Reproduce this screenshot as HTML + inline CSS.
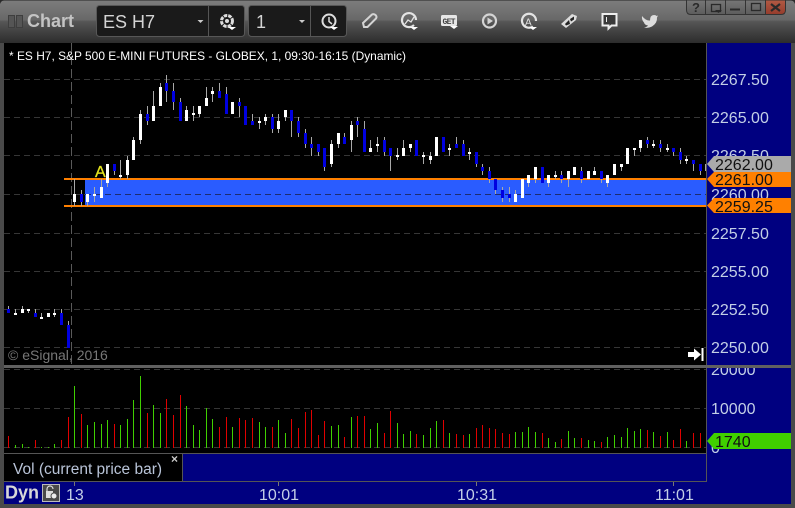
<!DOCTYPE html>
<html><head><meta charset="utf-8"><style>
html,body{margin:0;padding:0;background:#4a4a4a;width:795px;height:508px;overflow:hidden}
svg{display:block}
text{font-family:"Liberation Sans",sans-serif}
.ax{font-size:16px;fill:#c3cfe6}
.tg{font-size:16px;fill:#111}
.tm{font-size:16px;fill:#c3cfe6}
</style></head><body>
<svg width="795" height="508" viewBox="0 0 795 508" xmlns="http://www.w3.org/2000/svg">
<defs>
<linearGradient id="tb" x1="0" y1="0" x2="0" y2="1"><stop offset="0" stop-color="#7d7d7d"/><stop offset=".46" stop-color="#686868"/><stop offset=".5" stop-color="#565656"/><stop offset="1" stop-color="#2c2c2c"/></linearGradient>
<linearGradient id="bt" x1="0" y1="0" x2="0" y2="1"><stop offset="0" stop-color="#777"/><stop offset="1" stop-color="#5c5c5c"/></linearGradient>
<linearGradient id="cl" x1="0" y1="0" x2="0" y2="1"><stop offset="0" stop-color="#b25a44"/><stop offset="1" stop-color="#953c2c"/></linearGradient>
<clipPath id="vc"><rect x="707" y="368" width="84" height="114"/></clipPath>
</defs>
<rect width="795" height="508" fill="#4a4a4a"/>
<rect width="795" height="43" fill="url(#tb)"/>
<rect width="795" height="1" fill="#505050"/>
<path d="M0 0H4Q1 1 0 4ZM795 0H791Q794 1 795 4Z" fill="#2a2a2a"/>
<rect x="4" y="43" width="702" height="322" fill="#000"/>
<rect x="4" y="368" width="702" height="85" fill="#000"/>
<rect x="707" y="43" width="84" height="461" fill="#000080"/>
<rect x="4" y="482" width="703" height="22" fill="#000080"/>
<rect x="183" y="454" width="523" height="27" fill="#000080"/>
<rect x="4" y="454" width="178" height="27" fill="#000"/>
<g shape-rendering="crispEdges">
<rect x="4" y="453" width="702" height="1" fill="#555"/>
<rect x="182" y="453" width="1" height="28" fill="#555"/>
<rect x="4" y="481" width="703" height="1" fill="#555"/>
<rect x="706" y="43" width="1" height="439" fill="#555"/>
<rect x="4" y="365" width="787" height="3" fill="#606060"/>
<path d="M4 79.5H706M4 117.5H706M4 155.5H706M4 194.5H706M4 233.5H706M4 271.5H706M4 309.5H706M4 347.5H706M4 369.5H706M4 408.5H706M4 447.5H706" stroke="#363636" stroke-width="1" stroke-dasharray="6 4" fill="none"/>
<path d="M71.5 43V364" stroke="#5a5a5a" stroke-width="1" stroke-dasharray="9 4" fill="none"/>
<rect x="85" y="180" width="621" height="25" fill="#2a5cff"/>
<path d="M85 194.5H706" stroke="#1c2c70" stroke-width="1" stroke-dasharray="6 4" fill="none"/>
<rect x="64" y="178" width="642" height="2" fill="#ff8000"/>
<rect x="64" y="205" width="642" height="2" fill="#ff8000"/>
<path fill="none" stroke="#a8a8a8" stroke-width="1" d="M8.5 306V313M15.5 309V315M22.5 306V313M28.5 309V313M35.5 309V317M41.5 313V319M48.5 313V317M54.5 309V317M61.5 309V325M68.5 321V348M74.5 179V206M81.5 190V206M87.5 194V206M94.5 187V202M101.5 179V198M107.5 164V187M114.5 164V175M120.5 160V179M127.5 156V179M133.5 137V160M140.5 110V144M147.5 106V125M153.5 91V121M160.5 83V106M166.5 75V102M173.5 83V110M180.5 98V121M186.5 106V121M193.5 106V121M199.5 106V117M206.5 87V106M212.5 87V102M219.5 83V98M226.5 87V114M232.5 102V114M239.5 98V117M245.5 106V125M252.5 114V125M259.5 117V129M265.5 114V125M272.5 114V133M278.5 114V133M285.5 110V121M291.5 110V137M298.5 117V137M305.5 129V148M311.5 137V156M318.5 144V156M324.5 148V171M331.5 140V167M338.5 133V148M344.5 133V144M351.5 121V152M357.5 117V137M364.5 121V152M370.5 140V152M377.5 137V152M384.5 137V156M390.5 148V171M397.5 148V160M403.5 140V156M410.5 144V152M416.5 140V156M423.5 152V164M430.5 152V164M436.5 137V156M443.5 137V152M449.5 144V156M456.5 137V148M463.5 140V156M469.5 148V160M476.5 152V167M482.5 164V175M489.5 167V183M495.5 179V194M502.5 187V202M509.5 187V202M515.5 190V202M522.5 179V198M528.5 175V187M535.5 167V183M542.5 167V183M548.5 175V187M555.5 171V179M561.5 171V183M568.5 171V187M574.5 167V175M581.5 167V183M588.5 171V179M594.5 167V175M601.5 171V183M607.5 175V187M614.5 164V175M621.5 164V171M627.5 148V164M634.5 148V156M640.5 140V152M647.5 137V148M653.5 140V148M660.5 140V152M667.5 144V152M673.5 148V156M680.5 148V164M686.5 156V164M693.5 160V171M700.5 164V175M705.5 164V171"/>
<path fill="none" stroke="#fff" stroke-width="3" d="M15.5 313V315M22.5 309V313M28.5 309V311M41.5 317V319M48.5 313V317M54.5 313V315M74.5 194V202M87.5 194V202M94.5 194V196M101.5 187V198M107.5 164V183M120.5 175V177M127.5 160V175M133.5 140V160M140.5 114V140M153.5 106V121M160.5 87V106M186.5 110V121M193.5 113V115M199.5 106V114M206.5 98V106M212.5 91V94M232.5 102V114M259.5 121V123M265.5 117V121M278.5 121V129M285.5 110V117M331.5 144V164M338.5 133V144M351.5 125V140M370.5 148V152M377.5 144V146M397.5 155V157M403.5 148V156M410.5 144V148M423.5 155V157M430.5 156V160M436.5 137V156M449.5 148V150M469.5 152V154M515.5 194V202M522.5 179V198M528.5 175V183M535.5 167V179M548.5 175V183M555.5 175V177M568.5 171V179M574.5 167V175M588.5 171V179M594.5 171V175M607.5 175V183M614.5 164V175M621.5 164V167M627.5 148V164M634.5 148V150M640.5 140V148M653.5 144V146M667.5 148V150M686.5 159V161"/>
<path fill="none" stroke="#0000e0" stroke-width="3" d="M8.5 309V313M35.5 313V317M61.5 313V325M68.5 325V348M81.5 194V202M114.5 164V171M147.5 114V121M166.5 83V91M173.5 91V102M180.5 102V121M219.5 91V98M226.5 94V114M239.5 102V106M245.5 106V125M252.5 121V125M272.5 117V129M291.5 110V121M298.5 121V133M305.5 133V144M311.5 144V148M318.5 144V152M324.5 148V167M344.5 137V144M357.5 121V125M364.5 129V152M384.5 140V152M390.5 148V156M416.5 140V156M443.5 137V152M456.5 144V148M463.5 144V156M476.5 152V164M482.5 167V171M489.5 171V179M495.5 179V190M502.5 190V198M509.5 194V198M542.5 167V183M561.5 175V179M581.5 171V179M601.5 171V179M647.5 140V144M660.5 144V148M673.5 148V152M680.5 152V160M693.5 160V164M700.5 164V171"/>
<path fill="none" stroke="#3fd000" stroke-width="1" d="M15.5 445V448M22.5 444V448M28.5 447V448M41.5 447V448M48.5 447V448M54.5 444V448M74.5 386V448M87.5 425V448M94.5 422V448M101.5 424V448M107.5 420V448M120.5 425V448M127.5 419V448M133.5 400V448M140.5 376V448M153.5 405V448M160.5 413V448M186.5 406V448M193.5 425V448M199.5 430V448M206.5 408V448M212.5 419V448M232.5 427V448M259.5 422V448M265.5 427V448M278.5 420V448M285.5 433V448M331.5 426V448M338.5 425V448M351.5 417V448M370.5 429V448M377.5 423V448M397.5 423V448M403.5 434V448M410.5 431V448M423.5 435V448M430.5 428V448M436.5 421V448M449.5 433V448M469.5 434V448M515.5 432V448M522.5 432V448M528.5 427V448M535.5 432V448M548.5 438V448M555.5 442V448M568.5 431V448M574.5 438V448M588.5 440V448M594.5 441V448M607.5 437V448M614.5 435V448M621.5 437V448M627.5 428V448M634.5 431V448M640.5 429V448M653.5 432V448M667.5 432V448M686.5 441V448"/>
<path fill="none" stroke="#e00000" stroke-width="1" d="M8.5 436V448M35.5 440V448M61.5 440V448M68.5 417V448M81.5 414V448M114.5 424V448M147.5 413V448M166.5 399V448M173.5 415V448M180.5 395V448M219.5 427V448M226.5 417V448M239.5 418V448M245.5 420V448M252.5 418V448M272.5 427V448M291.5 419V448M298.5 428V448M305.5 412V448M311.5 410V448M318.5 435V448M324.5 421V448M344.5 437V448M357.5 416V448M364.5 416V448M384.5 433V448M390.5 411V448M416.5 434V448M443.5 420V448M456.5 434V448M463.5 435V448M476.5 428V448M482.5 425V448M489.5 428V448M495.5 429V448M502.5 433V448M509.5 434V448M542.5 433V448M561.5 439V448M581.5 438V448M601.5 442V448M647.5 430V448M660.5 436V448M673.5 440V448M680.5 429V448M693.5 433V448M700.5 433V448"/>
<path d="M74.5 482V486M278.5 482V486M476.5 482V486M673.5 482V486" stroke="#777" stroke-width="1"/>
</g>

<text x="9" y="60" font-size="12" fill="#fff" textLength="397" lengthAdjust="spacingAndGlyphs">* ES H7, S&amp;P 500 E-MINI FUTURES - GLOBEX, 1, 09:30-16:15 (Dynamic)</text>
<text x="95" y="177" font-size="16" fill="#e2e21e" stroke="#e2e21e" stroke-width=".3">A</text>
<text x="8" y="360" font-size="14" fill="#777">© eSignal, 2016</text>
<path d="M688 352H694V348.500L701 354.500L694 360.500V357H688Z" fill="#fff"/><rect x="701.500" y="348" width="2" height="13" fill="#fff"/>

<g class="ax">
<text class="ax" x="711" y="85">2267.50</text>
<text class="ax" x="711" y="123">2265.00</text>
<text class="ax" x="711" y="161">2262.50</text>
<text class="ax" x="711" y="200">2260.00</text>
<text class="ax" x="711" y="239">2257.50</text>
<text class="ax" x="711" y="277">2255.00</text>
<text class="ax" x="711" y="315">2252.50</text>
<text class="ax" x="711" y="353">2250.00</text>
<g clip-path="url(#vc)"><text class="ax" x="711" y="375">20000</text>
<text class="ax" x="711" y="414">10000</text>
<text class="ax" x="711" y="453">0</text></g>
</g>
<path d="M707 164L714 156H791V172H714Z" fill="#aaa"/>
<text class="tg" x="715" y="170">2262.00</text>
<path d="M707 179L714 172H791V187H714Z" fill="#ff8000"/>
<text class="tg" x="715" y="185">2261.00</text>
<path d="M707 205.500L714 198H791V213H714Z" fill="#ff8000"/>
<text class="tg" x="715" y="212">2259.25</text>
<path d="M707 441L714 433H791V449H714Z" fill="#40d000"/>
<text class="tg" x="715" y="447">1740</text>

<text x="13" y="474" font-size="15.500" fill="#b9c4d8">Vol (current price bar)</text>
<text x="171" y="463" font-size="12" font-weight="bold" fill="#ccc">×</text>
<text x="5" y="498.500" font-size="18" font-weight="bold" fill="#d8d8d8">Dyn</text>
<rect x="42.500" y="484.500" width="17" height="17" fill="#4a4a4a" stroke="#bbb"/>
<path d="M47 491V489A3 3 0 0 1 53 489" fill="none" stroke="#ddd" stroke-width="1.200"/><rect x="46" y="491" width="7" height="7" fill="#ddd"/><circle cx="54" cy="496" r="3" fill="#eee" stroke="#4a4a4a"/>
<text class="tm" x="66" y="500">13</text>
<text class="tm" x="259" y="500">10:01</text>
<text class="tm" x="457" y="500">10:31</text>
<text class="tm" x="655" y="500">11:01</text>

<!-- header -->
<rect x="8.500" y="15.500" width="6" height="12" fill="#555" stroke="#3e3e3e"/>
<rect x="16.500" y="15.500" width="6" height="12" fill="#555" stroke="#3e3e3e"/>
<text x="27" y="27" font-size="18" font-weight="bold" fill="#c4c4c4">Chart</text>
<rect x="96.500" y="5.500" width="148" height="31" rx="3" fill="#1a1a1a" stroke="#575757"/>
<rect x="208" y="6" width="1" height="30" fill="#555"/>
<text x="103" y="28" font-size="18" fill="#d4d4d4">ES H7</text>
<path d="M197.500 20H203.500L200.500 23Z" fill="#ccc"/>
<circle cx="227" cy="21" r="5.500" fill="none" stroke="#ddd" stroke-width="3" stroke-dasharray="3.500 1"/><circle cx="227" cy="21" r="2" fill="#ddd"/>
<path d="M228 27H236L232 30Z" fill="#fff"/>
<rect x="248.500" y="5.500" width="98" height="31" rx="3" fill="#1a1a1a" stroke="#575757"/>
<rect x="310" y="6" width="1" height="30" fill="#555"/>
<text x="256" y="28" font-size="18" fill="#d4d4d4">1</text>
<path d="M299 20H305L302 23Z" fill="#ccc"/>
<circle cx="329" cy="21" r="6.500" fill="none" stroke="#ddd" stroke-width="2"/><path d="M329 17V21.500L332 24" fill="none" stroke="#ddd" stroke-width="1.500"/>
<path d="M330 27H338L334 30Z" fill="#fff"/>

<path d="M364 27L363 23L372 14.500Q374 13.500 376 15.500Q377 17 376 18.500L367.500 27Z" fill="none" stroke="#d4d4d4" stroke-width="2"/>
<path d="M414 25A7 7 0 1 1 416 20" fill="none" stroke="#e4e4e4" stroke-width="2.200"/><path d="M405 24L408 20L411 22L414 17" fill="none" stroke="#e4e4e4" stroke-width="1.300"/><path d="M410 27H418L414 30Z" fill="#fff"/>
<rect x="441" y="15" width="16" height="11" rx="1.500" fill="#e6e6e6"/><text x="442.500" y="24" font-size="8" font-weight="bold" fill="#444" textLength="13" style="font-family:'Liberation Mono',monospace">GET</text><path d="M450 26H458L454 29Z" fill="#fff"/>
<circle cx="489.500" cy="21" r="6.500" fill="none" stroke="#d4d4d4" stroke-width="2.200"/><path d="M487.500 17.500L493 21L487.500 24.500Z" fill="#d4d4d4"/>
<path d="M533 26.500A7 7 0 1 1 536 21" fill="none" stroke="#e4e4e4" stroke-width="2.200"/><text x="525" y="25.500" font-size="10" fill="#e4e4e4">A</text><path d="M529 27H537L533 30Z" fill="#fff"/>
<path d="M561 24L572 14L577 16L576 20L566 28Z" fill="#ddd"/><path d="M565 24L569 20L570 24L566 25.500ZM570 19L574 16.500L574 19.500L571 21.500Z" fill="#222"/>
<path d="M602.500 14H616.500V25.500H611.500L608.500 28.500V25.500H602.500Z" fill="#3a3a3a" stroke="#eee" stroke-width="2"/><rect x="606" y="17" width="1" height="5" fill="#eee"/>
<path d="M642 16Q646 21 650 20.500Q650 15 654 15Q656 15 656.500 16L658 15.500L657 17.500Q657.500 23 652 26.500Q648 28.500 644 27.500Q647 27 648 25.500Q644.500 25 644 22.500Q641.500 20 642 16Z" fill="#dcdcdc"/>

<!-- window buttons -->
<path d="M686.500 0V10Q686.500 14.500 691 14.500H765.500V0Z" fill="url(#bt)" stroke="#333"/>
<path d="M765.500 0V14.500H781Q785.500 14.500 785.500 10V0Z" fill="url(#cl)" stroke="#333"/>
<path d="M705.500 0V14M725.500 0V14M745.500 0V14" stroke="#333" stroke-width="1" shape-rendering="crispEdges"/>
<text x="692" y="12" font-size="13" font-weight="bold" fill="#2a2a2a">?</text>
<rect x="711.500" y="4.500" width="9" height="7" fill="none" stroke="#2a2a2a" stroke-width="1.300"/><path d="M715 10H722L718.500 13Z" fill="#2a2a2a"/>
<rect x="730" y="8.500" width="10" height="2" fill="#2a2a2a"/>
<rect x="751.500" y="3.500" width="9" height="7" fill="none" stroke="#2a2a2a" stroke-width="1.300"/>
<path d="M771 4L780 11M780 4L771 11" stroke="#2a2a2a" stroke-width="2.200"/>
</svg>
</body></html>
